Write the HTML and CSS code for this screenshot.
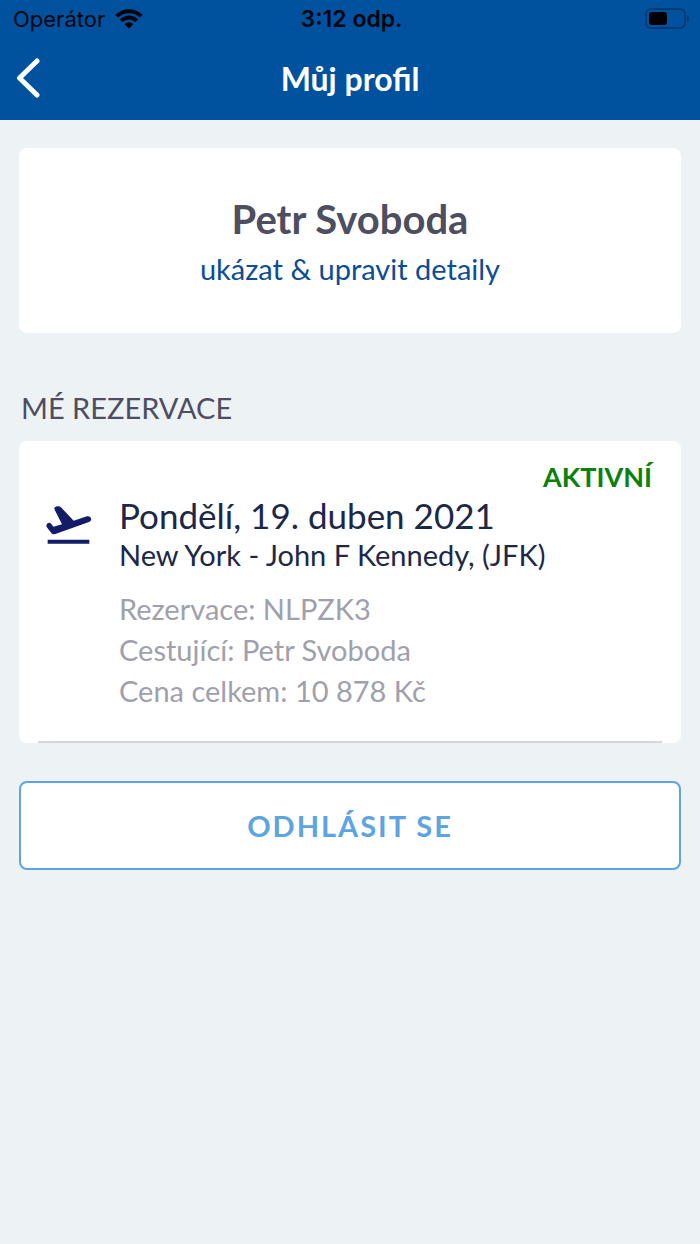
FILE: index.html
```html
<!DOCTYPE html>
<html lang="cs">
<head>
<meta charset="utf-8">
<meta name="viewport" content="width=device-width, initial-scale=1">
<title>Můj profil</title>
<link rel="stylesheet" href="styles.css">
</head>
<body>
<header class="top">
  <div class="status">
    <div class="carrier">
      <span>Operátor</span>
      <svg class="wifi" viewBox="0 0 28 20" aria-hidden="true">
        <path class="wifi-arc" d="M1.700 7.200a17.500 17.500 0 0 1 24.600 0M6.200 11.800a11 11 0 0 1 15.600 0"/>
        <path d="M9.600 15.200a6.200 6.200 0 0 1 8.800 0L14 19.600z"/>
      </svg>
    </div>
    <time class="clock">3:12 odp.</time>
    <svg class="battery" viewBox="0 0 46 22" aria-hidden="true">
      <rect class="battery-case" x="2" y="1" width="39" height="19" rx="5"/>
      <rect x="5" y="4" width="18" height="13" rx="3"/>
      <path class="battery-tip" d="M43 7c2.500 1 2.500 6 0 7z"/>
    </svg>
  </div>
  <div class="nav">
    <button class="back" type="button" aria-label="Zpět">
      <svg viewBox="0 0 24 40" aria-hidden="true"><path d="M21 3 3.500 20 21 37"/></svg>
    </button>
    <h1 class="title">Můj profil</h1>
  </div>
</header>
<main class="page">
  <section class="card profile">
    <h2 class="name">Petr Svoboda</h2>
    <a class="details" href="#">ukázat &amp; upravit detaily</a>
  </section>
  <h2 class="heading">MÉ REZERVACE</h2>
  <article class="card booking">
    <p class="state">AKTIVNÍ</p>
    <div class="trip">
      <svg class="plane" viewBox="50 46 138 120" aria-hidden="true">
        <path d="M52 112C48 102 60 95 66 103L72 111 98 104 76 60C73 53 78 51 84 50Q90 48 95 53L133 93 173 80C185 77 191 92 179 97L78 133Q70 136 66 130Z"/>
        <path d="M55 150h125v12H55z"/>
      </svg>
      <div>
        <h3 class="date">Pondělí, 19. duben 2021</h3>
        <p class="place">New York - John F Kennedy, (JFK)</p>
        <ul class="facts">
          <li>Rezervace: NLPZK3</li>
          <li>Cestující: Petr Svoboda</li>
          <li>Cena celkem: 10 878 Kč</li>
        </ul>
      </div>
    </div>
    <hr class="rule">
  </article>
  <button class="logout" type="button">ODHLÁSIT SE</button>
</main>
</body>
</html>
```
FILE: styles.css
```css
* { box-sizing: border-box; margin: 0; padding: 0; }
body {
  background: #edf2f5;
  color: #1c2848;
  font-family: Lato, "Noto Sans", sans-serif;
  font-size: 29px;
}
.top { background: #00529f; }
.status {
  display: grid;
  grid-template-columns: 1fr auto 1fr;
  align-items: center;
  height: 38px;
  padding: 0 10px 0 13px;
  color: #00060f;
  font-family: Inter, sans-serif;
  font-size: 22px;
}
.carrier { display: flex; align-items: center; gap: 10px; }
.wifi { width: 28px; height: 20px; }
.wifi-arc { fill: none; stroke: #00060f; stroke-width: 4; }
.clock { font-size: 23px; font-weight: 600; }
.battery { width: 46px; height: 22px; justify-self: end; }
.battery-case { fill: none; stroke: #003b78; stroke-width: 2; }
.battery-tip { fill: #003b78; }
.nav {
  display: grid;
  grid-template-columns: 24px 1fr 24px;
  align-items: center;
  height: 82px;
  padding: 0 16px 2px;
}
.back { height: 40px; border: 0; background: none; }
.back svg { display: block; width: 24px; height: 40px; }
.back path {
  fill: none;
  stroke: #fff;
  stroke-width: 5;
  stroke-linecap: round;
  stroke-linejoin: round;
}
.title { color: #fff; font-size: 32px; font-weight: 700; text-align: center; }
.page { padding: 28px 19px; }
.card { border-radius: 8px; background: #fff; }
.profile { padding: 47px 20px 42px; text-align: center; }
.name { color: #4d4e60; font-size: 40px; line-height: 48px; }
.details {
  display: block;
  margin-top: 4px;
  color: #0c4d94;
  line-height: 44px;
  text-decoration: none;
}
.heading {
  margin: 55px 0 13px;
  padding-left: 2px;
  color: #4d4e60;
  font-size: 29px;
  font-weight: 400;
  line-height: 40px;
}
.booking { padding-top: 20px; }
.state {
  padding-right: 29px;
  color: #0a810a;
  font-size: 27px;
  font-weight: 700;
  line-height: 32px;
  text-align: right;
}
.trip { display: flex; gap: 27px; padding: 2px 20px 30px 27px; }
.plane { flex: none; width: 46px; height: 40px; margin-top: 10px; fill: #121c68; }
.date { font-size: 35px; font-weight: 400; line-height: 40px; }
.place { line-height: 40px; }
.facts {
  padding-top: 13px;
  color: #a0a0ad;
  line-height: 41px;
  list-style: none;
}
.rule { height: 2px; margin: 0 19px; border: 0; background: #d4d6d9; }
.logout {
  width: 100%;
  height: 89px;
  margin-top: 38px;
  border: 2px solid #5ca4e2;
  border-radius: 8px;
  background: #fff;
  color: #5ca4e2;
  font: 700 29px Lato, "Noto Sans", sans-serif;
  letter-spacing: 2px;
}
```
